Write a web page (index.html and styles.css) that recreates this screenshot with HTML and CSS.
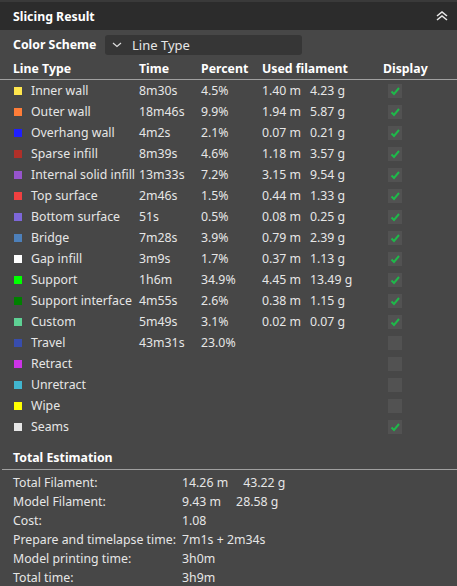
FILE: index.html
```html
<!DOCTYPE html>
<html>

<head>
    <meta charset="utf-8">
    <title>Slicing Result</title>
    <link rel="stylesheet" href="styles.css">
</head>

<body>
    <div class="panel">
        <div class="title-bar">
            <span class="title">Slicing Result</span>
            <svg class="collapse" width="14" height="12" viewBox="0 0 14 12">
                <polyline points="2,6 7,2 12,6" />
                <polyline points="2,10 7,6 12,10" />
            </svg>
        </div>

        <div class="scheme">
            <span class="scheme-label">Color Scheme</span>
            <div class="combo">
                <svg class="combo-arrow" width="10" height="6" viewBox="0 0 10 6">
                    <polyline points="1,1 5,4.5 9,1" />
                </svg>
                <span>Line Type</span>
            </div>
        </div>

        <div class="row head">
            <div>Line Type</div>
            <div>Time</div>
            <div>Percent</div>
            <div class="span2">Used filament</div>
            <div>Display</div>
        </div>

        <div id="lines"></div>

        <div class="est-head">Total Estimation</div>
        <div class="est">
            <div>Total Filament:</div><div>14.26 m<span class="gram">43.22 g</span></div>
            <div>Model Filament:</div><div>9.43 m<span class="gram">28.58 g</span></div>
            <div>Cost:</div><div>1.08</div>
            <div>Prepare and timelapse time:</div><div>7m1s + 2m34s</div>
            <div>Model printing time:</div><div>3h0m</div>
            <div>Total time:</div><div>3h9m</div>
        </div>
    </div>

    <script type="text/javascript">
    var LINES = [
        ['Inner wall', '#ffe64d', '8m30s', '4.5%', '1.40 m', '4.23 g', true],
        ['Outer wall', '#ff7d38', '18m46s', '9.9%', '1.94 m', '5.87 g', true],
        ['Overhang wall', '#1f1fff', '4m2s', '2.1%', '0.07 m', '0.21 g', true],
        ['Sparse infill', '#b03029', '8m39s', '4.6%', '1.18 m', '3.57 g', true],
        ['Internal solid infill', '#9654cc', '13m33s', '7.2%', '3.15 m', '9.54 g', true],
        ['Top surface', '#f04040', '2m46s', '1.5%', '0.44 m', '1.33 g', true],
        ['Bottom surface', '#7d67d9', '51s', '0.5%', '0.08 m', '0.25 g', true],
        ['Bridge', '#4d80ba', '7m28s', '3.9%', '0.79 m', '2.39 g', true],
        ['Gap infill', '#ffffff', '3m9s', '1.7%', '0.37 m', '1.13 g', true],
        ['Support', '#00ff00', '1h6m', '34.9%', '4.45 m', '13.49 g', true],
        ['Support interface', '#008000', '4m55s', '2.6%', '0.38 m', '1.15 g', true],
        ['Custom', '#5ed194', '5m49s', '3.1%', '0.02 m', '0.07 g', true],
        ['Travel', '#384dad', '43m31s', '23.0%', '', '', false],
        ['Retract', '#cc33e6', '', '', '', '', false],
        ['Unretract', '#41b5cf', '', '', '', '', false],
        ['Wipe', '#ffff00', '', '', '', '', false],
        ['Seams', '#e6e6e6', '', '', '', '', true]
    ];

    var CHECK = '<svg width="14" height="14" viewBox="0 0 14 14"><polyline points="3.5,7.5 6,10 11,4" /></svg>';

    var html = [];
    for (var i = 0; i < LINES.length; i++)
    {
        var l = LINES[i];
        html.push('<div class="row">' +
            '<div class="name"><span class="swatch" style="background:' + l[1] + '"></span>' + l[0] + '</div>' +
            '<div>' + l[2] + '</div>' +
            '<div>' + l[3] + '</div>' +
            '<div>' + l[4] + '</div>' +
            '<div>' + l[5] + '</div>' +
            '<div><span class="check">' + (l[6] ? CHECK : '') + '</span></div>' +
            '</div>');
    }
    document.getElementById('lines').innerHTML = html.join('');
    </script>
</body>

</html>
```

FILE: styles.css
```css
html, body {
    margin: 0;
    padding: 0;
    background-color: #474747;
}

body {
    font: 12.3px "Noto Sans", "Open Sans", sans-serif;
    color: #e6e6e6;
}

.panel {
    width: 457px;
    height: 586px;
    overflow: hidden;
}

.title-bar {
    height: 28px;
    border-top: 2px solid #3a3a3a;
    background-color: #2c2c2c;
    display: flex;
    align-items: center;
    justify-content: space-between;
    padding: 0 8px 0 13px;
}

.title {
    font-weight: bold;
    color: #fff;
}

.collapse polyline {
    fill: none;
    stroke: #e8e8e8;
    stroke-width: 1.6;
}

.scheme {
    height: 20px;
    margin-top: 5px;
    display: flex;
    align-items: center;
    padding-left: 13px;
}

.scheme-label {
    width: 92px;
    font-weight: bold;
    color: #fff;
    position: relative;
    top: -1px;
}

.combo {
    width: 197px;
    height: 20px;
    background-color: #363636;
    border-radius: 3px;
    display: flex;
    align-items: center;
    gap: 10px;
    padding-left: 7px;
    box-sizing: border-box;
    font-size: 13px;
}

.combo-arrow polyline {
    fill: none;
    stroke: #ddd;
    stroke-width: 1.2;
}

.row {
    display: grid;
    grid-template-columns: 126px 62px 61px 48px 73px auto;
    height: 21px;
    align-items: center;
    padding-left: 13px;
    white-space: nowrap;
}

.row.head {
    margin-top: 3px;
    height: 21px;
    font-weight: bold;
    color: #fff;
    border-bottom: 1px solid #a0a0a0;
}

.row.head .span2 {
    grid-column: span 2;
}

.name {
    display: flex;
    align-items: center;
}

.swatch {
    width: 8px;
    height: 8px;
    margin: 0 9px 0 1px;
}

.check {
    display: block;
    width: 14px;
    height: 14px;
    margin-left: 5px;
    background-color: #525252;
}

.check polyline {
    fill: none;
    stroke: #1fb84a;
    stroke-width: 2;
}

.est-head {
    margin: 9px 0 0 2px;
    height: 23px;
    padding-left: 11px;
    line-height: 23px;
    font-weight: bold;
    color: #fff;
    border-bottom: 1px solid #a0a0a0;
}

.est {
    display: grid;
    grid-template-columns: 169px auto;
    grid-auto-rows: 19px;
    align-items: center;
    padding: 3px 0 0 13px;
    white-space: nowrap;
}

.gram {
    margin-left: 15px;
}
```
